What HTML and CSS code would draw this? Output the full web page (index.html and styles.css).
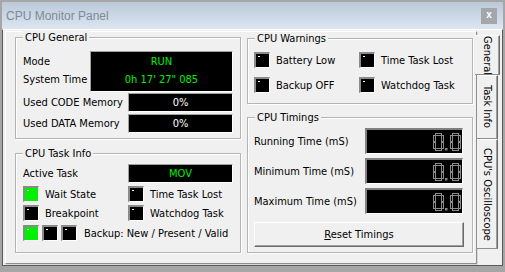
FILE: index.html
```html
<!DOCTYPE html>
<html>
<head>
<meta charset="utf-8">
<link rel="stylesheet" href="styles.css">
</head>
<body>
<div class="window">
  <div class="titlebar">
    <span class="title">CPU Monitor Panel</span>
    <span class="close">x</span>
  </div>
  <div class="client">
    <div class="page">
      <div class="col">
        <div class="group general">
          <span class="legend">CPU General</span>
          <div class="mode-row">
            <div class="mode-labels"><span>Mode</span><span>System Time</span></div>
            <div class="lcd lcd-big"><span class="green">RUN</span><span class="green">0h 17' 27" 085</span></div>
          </div>
          <div class="mem-row first"><span>Used CODE Memory</span><div class="lcd lcd-mem">0%</div></div>
          <div class="mem-row"><span>Used DATA Memory</span><div class="lcd lcd-mem">0%</div></div>
        </div>
        <div class="group taskinfo">
          <span class="legend">CPU Task Info</span>
          <div class="mem-row"><span>Active Task</span><div class="lcd lcd-mem green">MOV</div></div>
          <div class="led-grid">
            <div class="led-item"><span class="led on"></span><span>Wait State</span></div>
            <div class="led-item"><span class="led"></span><span>Time Task Lost</span></div>
            <div class="led-item"><span class="led"></span><span>Breakpoint</span></div>
            <div class="led-item"><span class="led"></span><span>Watchdog Task</span></div>
          </div>
          <div class="backup-row">
            <span class="led on"></span><span class="led"></span><span class="led"></span>
            <span class="backup-label">Backup: New / Present / Valid</span>
          </div>
        </div>
      </div>
      <div class="col">
        <div class="group warnings">
          <span class="legend">CPU Warnings</span>
          <div class="warn-grid">
            <div class="led-item"><span class="led"></span><span>Battery Low</span></div>
            <div class="led-item"><span class="led"></span><span>Time Task Lost</span></div>
            <div class="led-item"><span class="led"></span><span>Backup OFF</span></div>
            <div class="led-item"><span class="led"></span><span>Watchdog Task</span></div>
          </div>
        </div>
        <div class="group timings">
          <span class="legend">CPU Timings</span>
          <div class="time-row"><span>Running Time (mS)</span><div class="seg-box"><svg class="seg" width="28" height="18" viewBox="0 0 28 18"><g fill="none" stroke="#8c8c8c"><rect x="2.5" y="0.5" width="6" height="2"/><rect x="0.5" y="2.5" width="2" height="6"/><rect x="8.5" y="2.5" width="2" height="6"/><rect x="0.5" y="9.5" width="2" height="6"/><rect x="8.5" y="9.5" width="2" height="6"/><rect x="2.5" y="15.5" width="6" height="2"/><rect x="12.5" y="15.5" width="1.5" height="1.5"/><rect x="19.5" y="0.5" width="6" height="2"/><rect x="17.5" y="2.5" width="2" height="6"/><rect x="25.5" y="2.5" width="2" height="6"/><rect x="17.5" y="9.5" width="2" height="6"/><rect x="25.5" y="9.5" width="2" height="6"/><rect x="19.5" y="15.5" width="6" height="2"/></g></svg></div></div>
          <div class="time-row"><span>Minimum Time (mS)</span><div class="seg-box"><svg class="seg" width="28" height="18" viewBox="0 0 28 18"><g fill="none" stroke="#8c8c8c"><rect x="2.5" y="0.5" width="6" height="2"/><rect x="0.5" y="2.5" width="2" height="6"/><rect x="8.5" y="2.5" width="2" height="6"/><rect x="0.5" y="9.5" width="2" height="6"/><rect x="8.5" y="9.5" width="2" height="6"/><rect x="2.5" y="15.5" width="6" height="2"/><rect x="12.5" y="15.5" width="1.5" height="1.5"/><rect x="19.5" y="0.5" width="6" height="2"/><rect x="17.5" y="2.5" width="2" height="6"/><rect x="25.5" y="2.5" width="2" height="6"/><rect x="17.5" y="9.5" width="2" height="6"/><rect x="25.5" y="9.5" width="2" height="6"/><rect x="19.5" y="15.5" width="6" height="2"/></g></svg></div></div>
          <div class="time-row"><span>Maximum Time (mS)</span><div class="seg-box"><svg class="seg" width="28" height="18" viewBox="0 0 28 18"><g fill="none" stroke="#8c8c8c"><rect x="2.5" y="0.5" width="6" height="2"/><rect x="0.5" y="2.5" width="2" height="6"/><rect x="8.5" y="2.5" width="2" height="6"/><rect x="0.5" y="9.5" width="2" height="6"/><rect x="8.5" y="9.5" width="2" height="6"/><rect x="2.5" y="15.5" width="6" height="2"/><rect x="12.5" y="15.5" width="1.5" height="1.5"/><rect x="19.5" y="0.5" width="6" height="2"/><rect x="17.5" y="2.5" width="2" height="6"/><rect x="25.5" y="2.5" width="2" height="6"/><rect x="17.5" y="9.5" width="2" height="6"/><rect x="25.5" y="9.5" width="2" height="6"/><rect x="19.5" y="15.5" width="6" height="2"/></g></svg></div></div>
          <button class="btn"><u>R</u>eset Timings</button>
        </div>
      </div>
    </div>
    <div class="tabs">
      <div class="tab selected">General</div>
      <div class="tab tab-task">Task Info</div>
      <div class="tab tab-osc">CPU's Oscilloscope</div>
    </div>
  </div>
</div>
</body>
</html>
```
FILE: styles.css
```css
* { box-sizing: border-box; }
html, body { margin: 0; padding: 0; }
body {
  background: #a6a6a6;
  width: 505px;
  height: 272px;
  overflow: hidden;
  font-family: "DejaVu Sans Condensed", "DejaVu Sans", "Liberation Sans", sans-serif;
  font-stretch: condensed;
  font-size: 11px;
  color: #000;
}
.window {
  margin: 2px 0 0 2px;
  width: 501px;
}
.titlebar {
  height: 27px;
  background: linear-gradient(#bac9d9, #dbe6f1);
  display: flex;
  align-items: center;
  justify-content: space-between;
  padding: 0 6px 0 4px;
}
.title {
  font-family: "Liberation Sans", Arial, sans-serif;
  font-stretch: normal;
  font-size: 12px;
  color: #7f8a96;
}
.close {
  width: 16px;
  height: 16px;
  background: #a3a7ac;
  color: #fff;
  font-family: "Liberation Sans", Arial, sans-serif;
  font-weight: bold;
  font-size: 10px;
  display: flex;
  align-items: center;
  justify-content: center;
  line-height: 1;
  padding-bottom: 2px;
}
.client {
  height: 237px;
  background: #f0f0f0;
  border-top: 1px solid #fff;
  border-left: 1px solid #5a5a5a;
  border-right: 1px solid #5a5a5a;
  border-bottom: 1px solid #5a5a5a;
  padding: 1px 0 0 2px;
  display: flex;
  align-items: flex-start;
}
.page {
  width: 472px;
  height: 233px;
  border: 1px solid;
  border-color: #fff #8e8e8e #8e8e8e #fff;
  box-shadow: 1px 1px 0 #d8d8d8;
  padding: 5px 3px 0 9px;
  display: flex;
  gap: 6px;
}
.col {
  width: 226px;
  display: flex;
  flex-direction: column;
}
.group {
  border: 1px solid #b4b4b4;
  box-shadow: inset 1px 1px 0 #fff, 1px 1px 0 #fff;
  display: flex;
  flex-direction: column;
}
.legend {
  align-self: flex-start;
  height: 13px;
  line-height: 13px;
  margin: -7px 0 0 1px;
  padding: 0 2px;
  background: #f0f0f0;
}
.general { height: 102px; padding: 0 7px; }
.general .legend { margin-bottom: 7px; margin-left: 0; }
.taskinfo { height: 100px; margin-top: 14px; padding: 0 7px; }
.taskinfo .legend { margin-bottom: 4px; margin-left: 0; }
.warnings { height: 66px; margin-top: 1px; padding: 0 6px; }
.warnings .legend { margin-bottom: 7px; }
.timings { height: 136px; margin-top: 13px; padding: 0 9px 0 6px; }
.timings .legend { margin-bottom: 4px; }

.mode-row {
  display: flex;
  justify-content: space-between;
  height: 41px;
}
.mode-labels {
  display: flex;
  flex-direction: column;
  padding-top: 2px;
}
.mode-labels span { line-height: 18px; height: 18px; }
.lcd {
  background: #000;
  border: 1px solid;
  border-color: #a0a0a0 #fff #fff #a0a0a0;
  color: #fff;
  text-align: center;
}
.lcd-big {
  width: 143px;
  height: 41px;
  padding-top: 1px;
  display: flex;
  flex-direction: column;
  align-items: center;
}
.lcd-big span { line-height: 18px; height: 18px; }
.green { color: #00f000; }
.mem-row {
  display: flex;
  justify-content: space-between;
  align-items: center;
  margin-top: 2px;
}
.mem-row.first { margin-top: 1px; }
.taskinfo .mem-row { margin-top: 0; }
.lcd-mem {
  width: 105px;
  height: 19px;
  line-height: 17px;
}
.led-grid, .warn-grid {
  display: grid;
  grid-template-columns: 105px auto;
  row-gap: 3px;
  margin-top: 3px;
}
.warn-grid { margin-top: 0; row-gap: 9px; }
.led-item {
  display: flex;
  align-items: center;
  gap: 6px;
  height: 16px;
}
.led {
  width: 16px;
  height: 16px;
  flex: none;
  background: #000;
  border-style: solid;
  border-width: 2px 1px 1px 2px;
  border-color: #8a8a8a #fff #fff #8a8a8a;
  position: relative;
}
.led::after {
  content: "";
  position: absolute;
  left: 2px;
  top: 2px;
  width: 2px;
  height: 1px;
  background: #fff;
}
.led.on { background: #00f000; }
.backup-row {
  display: flex;
  align-items: center;
  gap: 3px;
  height: 16px;
  margin-top: 4px;
}
.backup-label { margin-left: 4px; }

.time-row {
  display: flex;
  justify-content: space-between;
  align-items: center;
  height: 26px;
  margin-bottom: 4px;
}
.seg-box {
  width: 98px;
  height: 26px;
  background: #000;
  border-style: solid;
  border-width: 2px 1px 1px 2px;
  border-color: #808080 #fff #fff #808080;
  display: flex;
  justify-content: flex-end;
  align-items: center;
  padding-right: 1px;
}
.seg { display: block; }
.btn {
  margin-top: 4px;
  width: 210px;
  height: 25px;
  font-family: inherit;
  font-stretch: condensed;
  font-size: 11px;
  color: #000;
  background: #f0f0f0;
  border: 1px solid;
  border-color: #fff #696969 #696969 #fff;
  box-shadow: inset -1px -1px 0 #a0a0a0;
  padding: 0;
}
.tabs {
  display: flex;
  flex-direction: column;
  padding-top: 4px;
}
.tab {
  writing-mode: vertical-rl;
  width: 21px;
  background: #f0f0f0;
  border-top: 1px solid #fff;
  border-right: 1px solid #696969;
  border-bottom: 1px solid #8e8e8e;
  box-shadow: inset -1px 0 0 #a0a0a0;
  display: flex;
  align-items: center;
  justify-content: center;
  font-size: 11px;
  line-height: 19px;
  white-space: nowrap;
  overflow: visible;
}
.tab.selected {
  width: 25px;
  height: 40px;
  margin-left: -2px;
  position: relative;
}
.tab-task { height: 64px; }
.tab-osc { height: 110px; }
```
